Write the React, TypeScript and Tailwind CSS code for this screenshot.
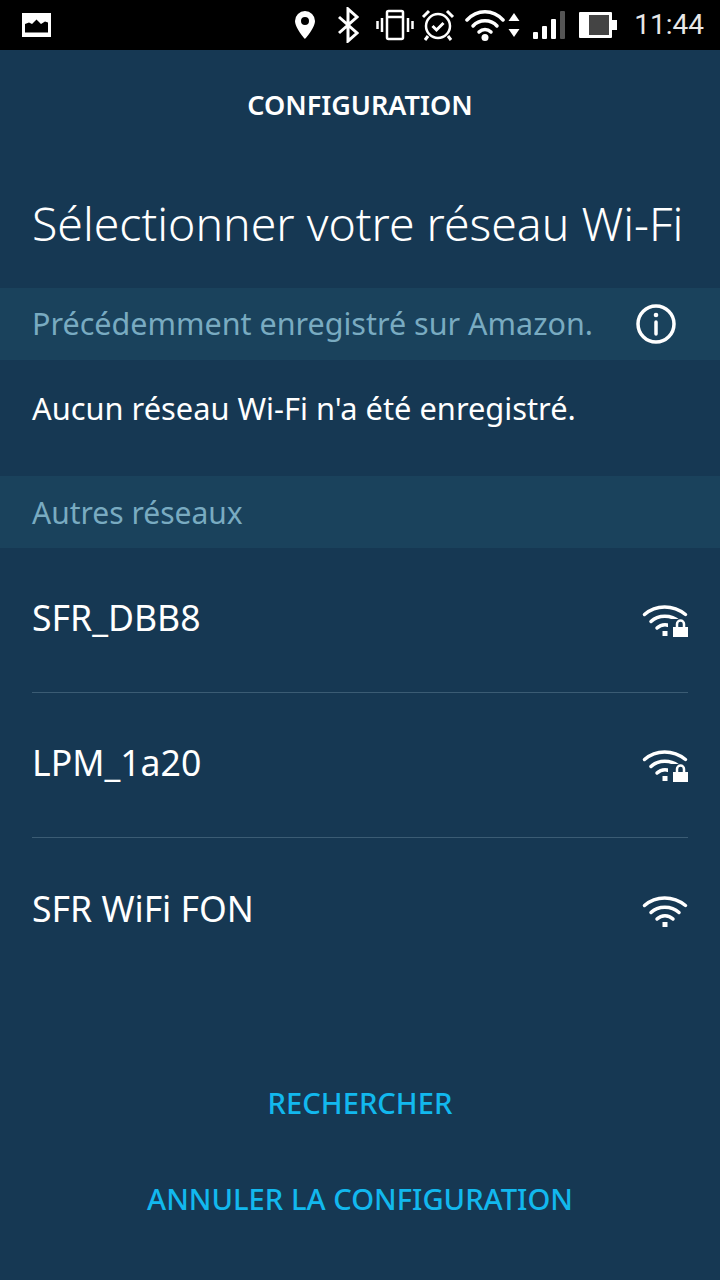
function WifiIcon({ locked }: { locked?: boolean }) {
  return (
    <svg width="46" height="34" viewBox="0 0 46 34" fill="none" stroke="#fff" strokeWidth="3.500" strokeLinecap="round">
      <path d="M2.500 11.500C14 1.500 31 1.500 43.500 11.500" />
      <path d="M9 18.500C16 11.500 29.500 11.500 37 18.500" />
      <path d="M15 25C19.500 20.500 26.500 20.500 31 25" />
      <rect x="20.500" y="28" width="5" height="5" fill="#fff" stroke="none" />
      {locked && (
        <>
          <rect x="26" y="16" width="20" height="18" fill="#163853" stroke="none" />
          <rect x="31" y="24" width="15" height="10" fill="#fff" stroke="none" />
          <path d="M35 24v-3a3 3 0 0 1 7 0v3" strokeWidth="2.500" strokeLinecap="butt" />
        </>
      )}
    </svg>
  );
}

function InfoIcon() {
  return (
    <svg width="40" height="40" viewBox="0 0 40 40" fill="none" stroke="#fff" strokeWidth="3.500" strokeLinecap="round">
      <circle cx="20" cy="20" r="18" />
      <path d="M20 18v12" />
      <circle cx="20" cy="11" r="2.300" fill="#fff" stroke="none" />
    </svg>
  );
}

function StatusBar() {
  return (
    <div className="flex h-[50px] items-center justify-between bg-black pl-[22px] pr-[16px] text-white">
      <svg width="29" height="24" viewBox="0 0 29 24">
        <path fill="#fff" fillRule="evenodd" d="M0 0h29v24H0zM3 19.500h23v-10l-3-1-4 2.500-4.500-4.500-4.500 4.500-3-1.500-4 1.500z" />
      </svg>
      <div className="flex items-center">
        <svg width="20" height="28" viewBox="0 0 20 28" className="mr-[22px]">
          <path fill="#fff" fillRule="evenodd" d="M10 0a10 10 0 0 1 10 10c0 7-10 18-10 18S0 17 0 10A10 10 0 0 1 10 0zm0 6a4 4 0 1 0 0 8 4 4 0 0 0 0-8z" />
        </svg>
        <svg width="22" height="36" viewBox="0 0 22 36" className="mr-[17px]" fill="none" stroke="#fff" strokeWidth="3">
          <path d="M2 10l18 16-9 8V2l9 8L2 26" />
        </svg>
        <svg width="38" height="32" viewBox="0 0 38 32" className="mr-[7px]" fill="none" stroke="#fff" strokeWidth="2.500">
          <rect x="11" y="2" width="16" height="28" rx="1.500" />
          <path d="M11 8h16M6 9v14M1.500 12v8M32 9v14M36.500 12v8" />
        </svg>
        <svg width="34" height="34" viewBox="0 0 34 34" className="mr-[10px]" fill="none" stroke="#fff" strokeWidth="2.500">
          <circle cx="17" cy="18" r="12" />
          <path d="M11.500 18l4 4 7-7M2 9l6-6M26 3l6 6M7 28l-3 4M27 28l3 4" strokeWidth="3" />
        </svg>
        <svg width="40" height="32" viewBox="0 0 40 32" className="mr-[3px]" fill="none" stroke="#fff" strokeWidth="3.500" strokeLinecap="round">
          <path d="M2 11C12 0 28 0 38 11" />
          <path d="M8 17C14 10 26 10 32 17" />
          <path d="M14 23C17.500 19.500 22.500 19.500 26 23" />
          <circle cx="20" cy="28.500" r="3.500" fill="#fff" stroke="none" />
        </svg>
        <svg width="12" height="24" viewBox="0 0 12 24" className="mr-[13px]">
          <path fill="#fff" d="M6 0l5.500 8H.5zM6 24L.5 16h11z" />
        </svg>
        <svg width="32" height="28" viewBox="0 0 32 28" className="mr-[14px]">
          <rect x="0" y="21" width="5" height="7" rx="1" fill="#fff" />
          <rect x="9" y="15" width="5" height="13" rx="1" fill="#fff" />
          <rect x="18" y="8" width="5" height="20" rx="1" fill="#fff" />
          <rect x="27" y="0" width="5" height="28" rx="1" fill="#555" />
        </svg>
        <svg width="38" height="26" viewBox="0 0 38 26" className="mr-[17px]">
          <rect x="0" y="0" width="33" height="26" rx="1" fill="#fff" />
          <rect x="10" y="3" width="20" height="20" fill="#444" />
          <rect x="33" y="8" width="5" height="10" fill="#fff" />
        </svg>
        <span className="font-['Roboto',sans-serif] text-[28px] leading-none text-[#e8e8e8]">11:44</span>
      </div>
    </div>
  );
}

function SectionHeader({ label, info, size }: { label: string; info?: boolean; size: string }) {
  return (
    <div className={`flex h-[72px] items-center justify-between bg-[#1a425c] pl-[32px] pr-[44px] text-[#79abc1] ${size}`}>
      <span>{label}</span>
      {info && <InfoIcon />}
    </div>
  );
}

function NetworkRow({ name, locked, last }: { name: string; locked?: boolean; last?: boolean }) {
  return (
    <div className={`flex h-[145px] items-center justify-between ${last ? "" : "border-b border-[#3b5c74]"}`}>
      <span className="-translate-y-[2px] text-[35.6px] text-white">{name}</span>
      <WifiIcon locked={locked} />
    </div>
  );
}

export default function App() {
  return (
    <div className="flex h-[1280px] w-[720px] flex-col overflow-hidden bg-[#163853] font-['Noto_Sans',sans-serif]">
      <StatusBar />

      <div className="flex h-[110px] items-center justify-center text-[27px] font-semibold text-white">CONFIGURATION</div>

      <div className="flex h-[128px] items-start pl-[32px] pt-[33px] text-[46.4px] font-light leading-[60px] text-white">
        Sélectionner votre réseau Wi-Fi
      </div>

      <SectionHeader label="Précédemment enregistré sur Amazon." info size="text-[30.5px]" />

      <div className="flex h-[116px] items-start pl-[32px] pt-[26px] text-[30.8px] leading-[44px] text-white">
        Aucun réseau Wi-Fi n'a été enregistré.
      </div>

      <SectionHeader label="Autres réseaux" size="text-[30px]" />

      <div className="px-[32px]">
        <NetworkRow name="SFR_DBB8" locked />
        <NetworkRow name="LPM_1a20" locked />
        <NetworkRow name="SFR WiFi FON" last />
      </div>

      <div className="mt-[100px] flex flex-col items-center gap-[56px] text-[29.2px] font-medium leading-[40px] text-[#12b8ee]">
        <button>RECHERCHER</button>
        <button>ANNULER LA CONFIGURATION</button>
      </div>
    </div>
  );
}
